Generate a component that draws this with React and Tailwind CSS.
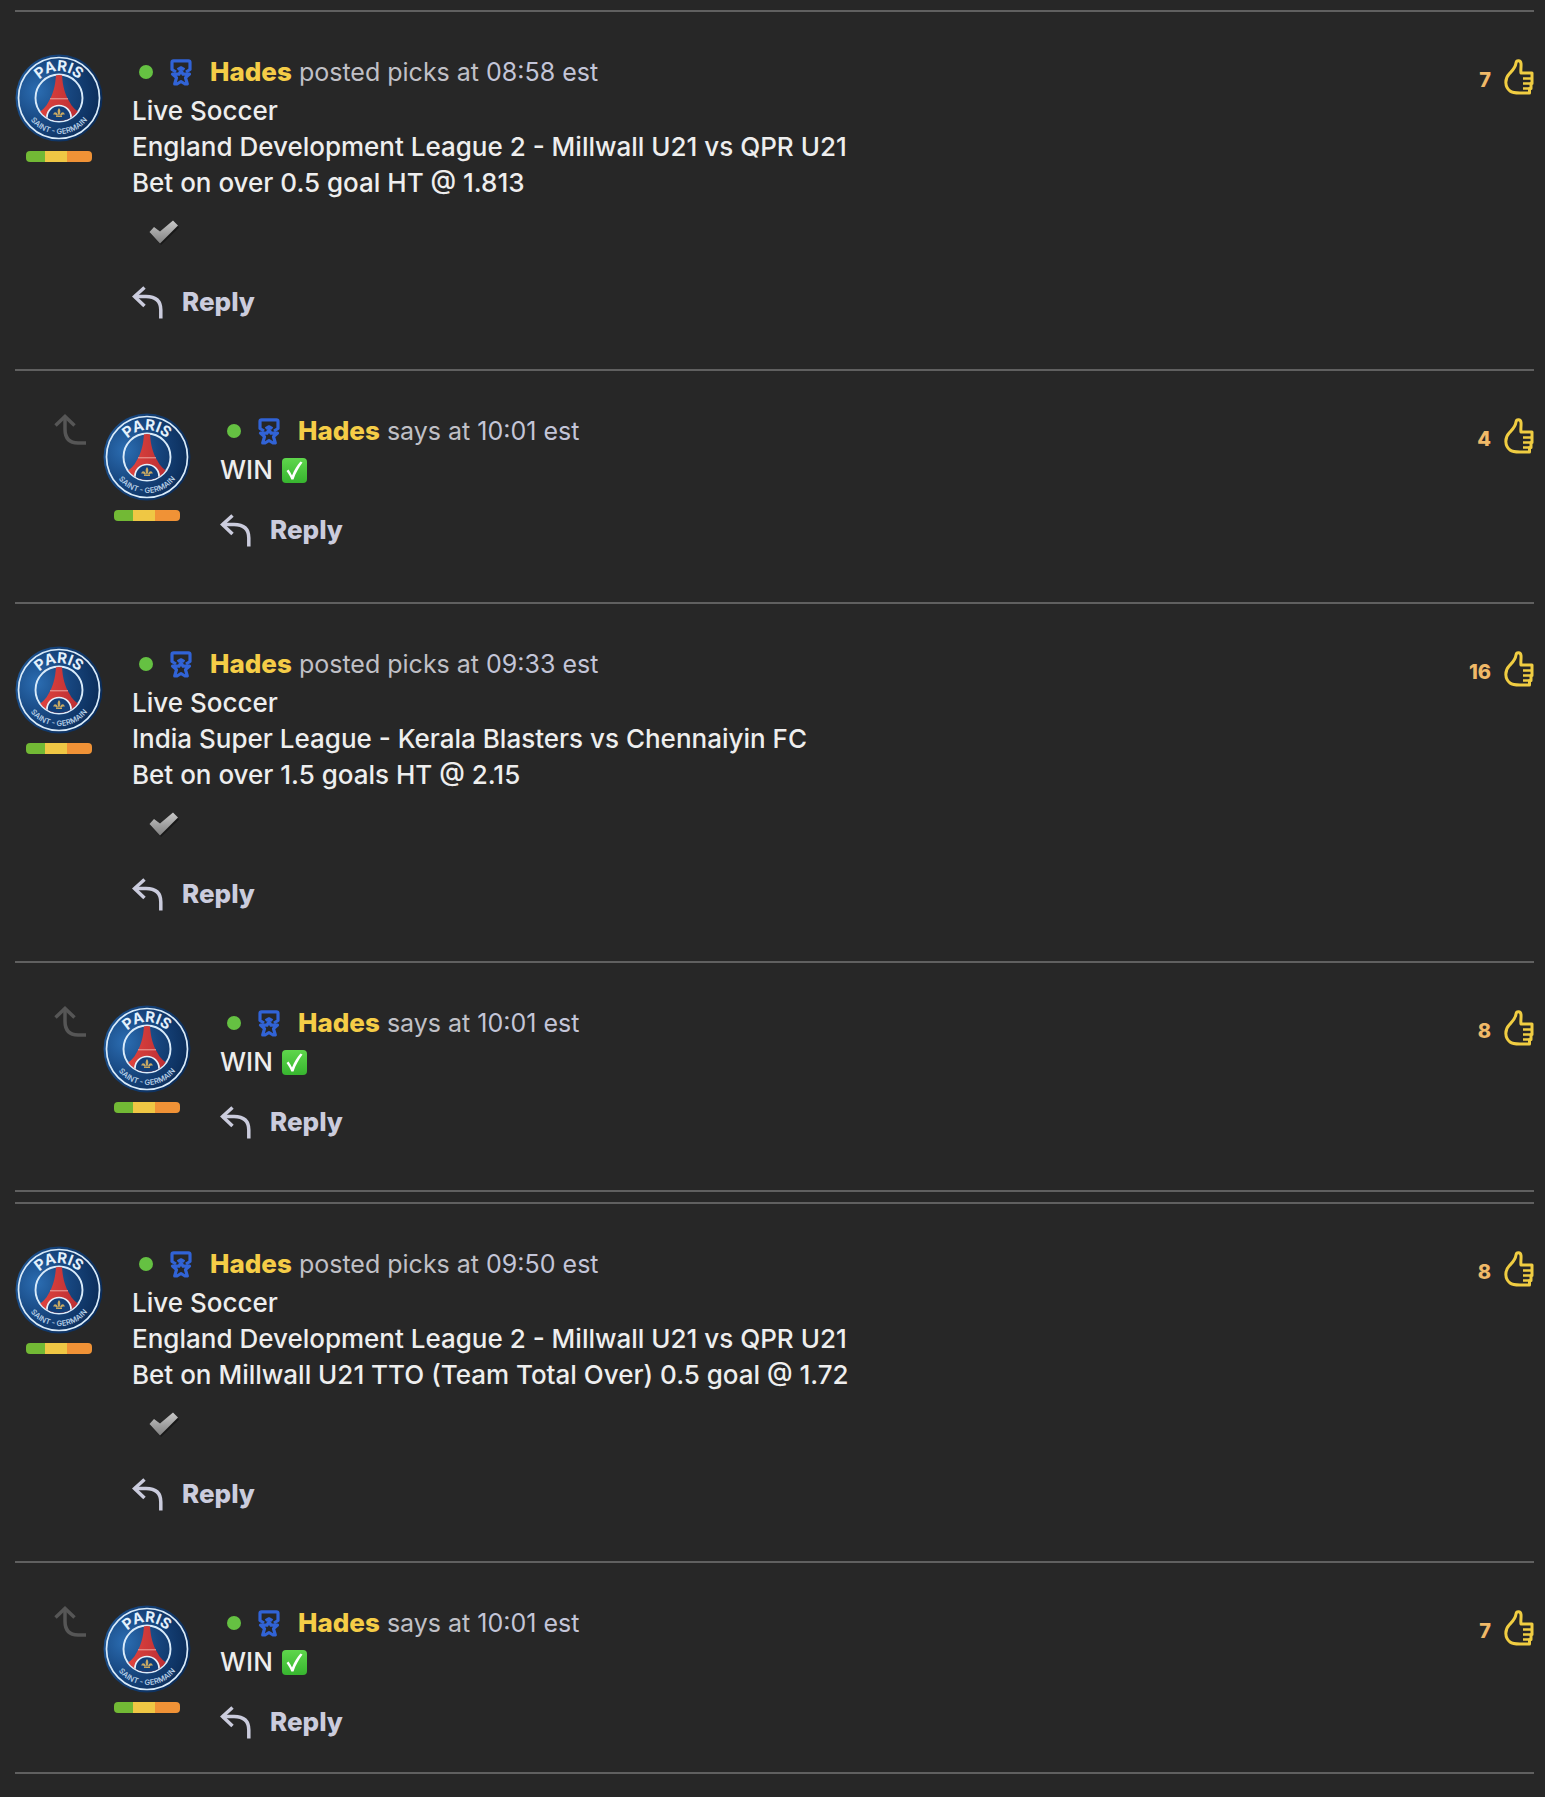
import { useId } from "react";

const threads = [
  {
    id: 1,
    endClass: "pb-[54px]",
    post: {
      time: "08:58",
      likes: 7,
      lines: ["Live Soccer", "England Development League 2 - Millwall U21 vs QPR U21", "Bet on over 0.5 goal HT @ 1.813"],
    },
    reply: { time: "10:01", likes: 4, text: "WIN" },
  },
  {
    id: 2,
    endClass: "pb-[50px] border-b-2 mb-[10px]",
    post: {
      time: "09:33",
      likes: 16,
      lines: ["Live Soccer", "India Super League - Kerala Blasters vs Chennaiyin FC", "Bet on over 1.5 goals HT @ 2.15"],
    },
    reply: { time: "10:01", likes: 8, text: "WIN" },
  },
  {
    id: 3,
    endClass: "pb-[32px] border-b-2",
    post: {
      time: "09:50",
      likes: 8,
      lines: ["Live Soccer", "England Development League 2 - Millwall U21 vs QPR U21", "Bet on Millwall U21 TTO (Team Total Over) 0.5 goal @ 1.72"],
    },
    reply: { time: "10:01", likes: 7, text: "WIN" },
  },
];

// -------- Icons --------

function CrestIcon() {
  const id = useId();

  return (
    <svg viewBox="0 0 88 88" className="size-[88px]" role="img" aria-label="Paris Saint-Germain">
      <defs>
        <radialGradient id={`${id}bg`} cx="0.25" cy="0.42" r="0.75">
          <stop offset="0" stopColor="#2b6db2" />
          <stop offset="0.5" stopColor="#17467f" />
          <stop offset="1" stopColor="#0b2c58" />
        </radialGradient>
        <linearGradient id={`${id}red`} x1="0" y1="0" x2="1" y2="0">
          <stop offset="0" stopColor="#e2453f" />
          <stop offset="1" stopColor="#b92d33" />
        </linearGradient>
        <clipPath id={`${id}clip`}>
          <circle cx="44" cy="44" r="23" />
        </clipPath>
        <path id={`${id}top`} d="M17.2 44 A26.8 26.8 0 0 1 70.8 44" />
        <path id={`${id}bottom`} d="M8 44 A36 36 0 0 0 80 44" />
      </defs>
      <circle cx="44" cy="44" r="43.5" fill={`url(#${id}bg)`} />
      <circle cx="44" cy="44" r="40.5" fill="none" stroke="#d9ebfa" strokeWidth="1.7" />
      <circle cx="44" cy="44" r="23.5" fill="none" stroke="#d9ebfa" strokeWidth="1.9" />
      <g clipPath={`url(#${id}clip)`}>
        <path d="M41 20 h6 C47.500 32 50 40 54 47 C57 53 61 57 66 59 L60 70 H28 L22 59 C27 57 31 53 34 47 C38 40 40.500 32 41 20z" fill={`url(#${id}red)`} />
        <path d="M35 44.800 h18" stroke="#eda5a0" strokeWidth="1" />
        <path d="M32 68 V63 A12 11.500 0 0 1 56 63 V68z" fill="#123f78" stroke="#e6f0fa" strokeWidth="1.700" />
      </g>
      <path d="M44 54 c2 2.500 1.500 4.500 0 9 c-1.500-4.500-2-6.500 0-9z M43 61 c-1.500-4-5-3-4.500 0 c1-1 2.500-0.500 3.500 1.500z M45 61 c1.500-4 5-3 4.500 0 c-1-1-2.500-0.500-3.500 1.500z M41 62h6v1h-6z" fill="#c7a963" />
      <text fill="#e4f1fc" fontSize="15" className="font-['Inter',sans-serif] font-bold">
        <textPath href={`#${id}top`} startOffset="50%" textAnchor="middle">PARIS</textPath>
      </text>
      <text fill="#b4cde5" fontSize="7.5" className="font-['Inter',sans-serif] font-semibold">
        <textPath href={`#${id}bottom`} startOffset="50%" textAnchor="middle">SAINT - GERMAIN</textPath>
      </text>
    </svg>
  );
}

function MedalIcon() {
  return (
    <svg viewBox="0 0 22 27" className="h-[27px] w-[22px] shrink-0" fill="none" stroke="#3163d6" strokeLinejoin="round" aria-hidden="true">
      <path d="M6 13 L2 10.500 V3.500 Q2 1.800 3.700 1.800 H18.300 Q20 1.800 20 3.500 V10.500 L16 13" strokeWidth="3.200" />
      <path d="M7.500 10.500 L11 8.500 L14.500 10.500" strokeWidth="2.600" />
      <path d="M11 11.500 L13 15.200 L19.500 15 L15.500 18.700 L17.300 25 H15 L11 22.500 L7 25 H4.700 L6.500 18.700 L2.500 15 L9 15.200z" strokeWidth="3.200" />
    </svg>
  );
}

function ThumbIcon() {
  return (
    <svg viewBox="0 0 30 36" className="h-[36px] w-[30px] shrink-0" fill="none" stroke="#f0cd42" strokeWidth="3" strokeLinejoin="round" aria-hidden="true">
      <path d="M28 14 H17 C16.500 11 17.300 8 17 4.500 C16.500 1 12.500 1 12 4 C11.400 9 8.500 11.500 5.500 14.500 C0.300 20 0.800 28 6 32 C8.500 34 12 34 16 34 H25.500 V29.500 H27 V24.500 H28 V19.500 H28z" />
      <path d="M19 19.500 H28 M19 24.500 H28 M19 29.500 H26" strokeWidth="2.600" />
    </svg>
  );
}

function ReplyIcon() {
  return (
    <svg viewBox="0 0 31 33" className="h-[33px] w-[31px] shrink-0" fill="none" stroke="currentColor" strokeWidth="3.500" aria-hidden="true">
      <path d="M12.500 1.500 L2.500 10.500 L12.500 20" />
      <path d="M2.500 10.500 H14 C24 10.500 28.800 15.500 28.800 24 V32.500" />
    </svg>
  );
}

function ThreadArrowIcon() {
  return (
    <svg viewBox="0 0 33 32" className="mt-px h-[32px] w-[33px] shrink-0" fill="none" stroke="#565656" strokeWidth="3.500" aria-hidden="true">
      <path d="M1.500 11.500 L11 2.500 L20.500 11.500" />
      <path d="M11 2.500 V15 C11 24 15.500 29 24 29 H32" />
    </svg>
  );
}

function GradedIcon() {
  const id = useId();

  return (
    <svg viewBox="0 0 31 26" className="h-[26px] w-[31px]" role="img" aria-label="Graded">
      <defs>
        <linearGradient id={id} x1="0" y1="0" x2="0" y2="1">
          <stop offset="0" stopColor="#c8c8c8" />
          <stop offset="1" stopColor="#808080" />
        </linearGradient>
      </defs>
      <path d="M1.500 13.500 L6.500 8.500 L11.500 13 L24.500 2.500 L30 7.500 L12 25z" fill="#181818" />
      <path d="M0.500 12 L5 7 L11 11.500 L24 0.500 L29 5.500 L11 23.500z" fill={`url(#${id})`} />
    </svg>
  );
}

function WinIcon() {
  const id = useId();

  return (
    <svg viewBox="0 0 25 25" className="size-[25px]" role="img" aria-label="Correct">
      <defs>
        <linearGradient id={id} x1="0" y1="0" x2="0" y2="1">
          <stop offset="0" stopColor="#5fd64c" />
          <stop offset="1" stopColor="#37b52f" />
        </linearGradient>
      </defs>
      <rect width="25" height="25" rx="4" fill={`url(#${id})`} />
      <path d="M4.500 13 L6.500 11.500 C8 13.500 9 15.500 10 17.500 C12.500 11.500 15 7.500 18.500 3.500 L20.500 4.500 C17 9.500 13.500 15 11.500 21.500 H9.300 C8 18 6.500 15.500 4.500 13z" fill="#fff" />
    </svg>
  );
}

// -------- Message parts --------

function Avatar() {
  return (
    <div className="flex w-[88px] shrink-0 flex-col items-center gap-[9px]">
      <CrestIcon />
      <div className="flex h-[11px] w-[66px] overflow-hidden rounded-[4px]">
        <span className="w-[19px] bg-[#72b935]" />
        <span className="w-[22px] bg-[#efc744]" />
        <span className="flex-1 bg-[#f09236]" />
      </div>
    </div>
  );
}

function MessageHeader({ action, time }) {
  return (
    <header className="flex items-center">
      <span className="ml-[7px] size-[14px] shrink-0 rounded-full bg-[#65c142]" />
      <span className="mr-[18px] ml-[17px] flex">
        <MedalIcon />
      </span>
      <p className="text-[25px] text-[#c0c0c6]">
        <a href="#hades" className="text-[26px] font-extrabold text-[#f5cd47]">Hades</a> {action} at <time className="text-[#c3c5d8]">{time} est</time>
      </p>
    </header>
  );
}

function ReplyButton() {
  return (
    <button type="button" className="flex cursor-pointer items-center gap-[19px] font-extrabold text-[#cbccdd]">
      <ReplyIcon />
      Reply
    </button>
  );
}

function LikeButton({ count }) {
  return (
    <button type="button" aria-label={`${count} likes`} className="mt-[5px] flex shrink-0 cursor-pointer items-start gap-[13px] self-start">
      <span className="pt-[3px] text-[20px] font-extrabold text-[#f0b968]">{count}</span>
      <ThumbIcon />
    </button>
  );
}

function Post({ post }) {
  return (
    <article className="flex border-t-2 border-[#606060] pt-[42px] pb-[49px]">
      <Avatar />
      <div className="ml-[29px] flex-1">
        <MessageHeader action="posted picks" time={post.time} />
        <div className="mt-[3px] font-medium text-[#eeeeee]">
          {post.lines.map((line) => (
            <p key={line}>{line}</p>
          ))}
        </div>
        <div className="mt-[19px] mb-[38px] ml-[17px]">
          <GradedIcon />
        </div>
        <ReplyButton />
      </div>
      <LikeButton count={post.likes} />
    </article>
  );
}

function ReplyMessage({ reply, endClass }) {
  return (
    <article className={`flex border-t-2 border-[#606060] pt-[42px] pl-[39px] ${endClass}`}>
      <ThreadArrowIcon />
      <div className="ml-[16px]">
        <Avatar />
      </div>
      <div className="ml-[29px] flex-1">
        <MessageHeader action="says" time={reply.time} />
        <p className="mt-[3px] mb-[24px] flex items-center gap-[9px] font-medium text-[#eeeeee]">
          {reply.text} <WinIcon />
        </p>
        <ReplyButton />
      </div>
      <LikeButton count={reply.likes} />
    </article>
  );
}

export default function App() {
  return (
    <main className="min-h-screen bg-[#272727] pt-[10px] pr-[11px] pb-[22px] pl-[15px] font-['Inter',sans-serif] text-[26px] leading-[36px]">
      {threads.map((thread) => (
        <section key={thread.id}>
          <Post post={thread.post} />
          <ReplyMessage reply={thread.reply} endClass={thread.endClass} />
        </section>
      ))}
    </main>
  );
}
